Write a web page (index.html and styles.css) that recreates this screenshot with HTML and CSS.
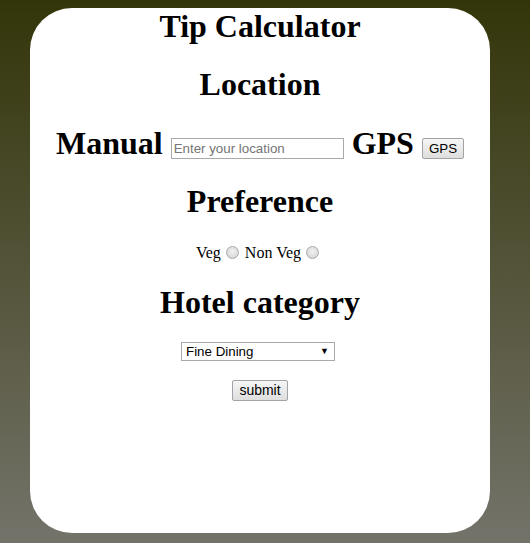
FILE: index.html
```html
<!DOCTYPE html>
<html lang="en">

<head>
    <meta charset="UTF-8">
    <meta name="viewport" content="width=device-width, initial-scale=1.0">
    <title>Tip Calculator</title>
    <link rel="stylesheet" href="styles.css">
</head>

<body>
    <div class="container">
        <h1 class="title">Tip Calculator</h1>

        <!-- Location -->
        <h1>Location</h1>
        <h1>Manual <input type="text" class="location" placeholder="Enter your location"> GPS <button type="button" class="btn">GPS</button></h1>

        <!-- Preference -->
        <h1>Preference</h1>
        <div class="pref">
            Veg <span class="radio"></span> Non Veg <span class="radio"></span>
        </div>

        <!-- Hotel category -->
        <h1>Hotel category</h1>
        <div class="row select-row">
            <span class="select-wrap">
                <select class="category">
                    <option>Fine Dining</option>
                    <option>Casual Dining</option>
                    <option>Fast Food</option>
                </select>
            </span>
        </div>
        <div class="row">
            <button type="submit" class="btn submit">submit</button>
        </div>
    </div>
</body>

</html>
```

FILE: styles.css
```css
html {
    height: 100%;
}

body {
    font-family: "Liberation Serif", "Times New Roman", serif;
    margin: 8px 40px 10px 30px;
    min-height: calc(100% - 18px);
    background: linear-gradient(to bottom, #333509 0%, #74736a 100%) fixed;
}

.container {
    height: 525px;
    background: white;
    border-radius: 42px;
    text-align: center;
    overflow: hidden;
}

h1 {
    font-size: 32px;
    margin: 0.67em 0;
}

h1.title {
    margin-top: 0;
}

.location {
    font-family: Arial, "Liberation Sans", sans-serif;
    font-size: 13.33px;
    width: 173px;
    height: 21px;
    box-sizing: border-box;
    padding: 1px 2px;
    border: 1px solid #a9a9a9;
    vertical-align: 1px;
}

.location::placeholder {
    color: #757575;
}

.btn {
    font-family: Arial, "Liberation Sans", sans-serif;
    font-size: 13.33px;
    height: 21px;
    padding: 0 6px;
    color: #000;
    background: linear-gradient(to bottom, #f6f6f6, #dedede);
    border: 1px solid #a3a3a3;
    border-radius: 2px;
    vertical-align: 1px;
}

.submit {
    height: 21px;
    padding: 0 6px;
    font-size: 14px;
}

.pref {
    font-size: 16px;
    line-height: 21px;
    padding-right: 3px;
}

.radio {
    display: inline-block;
    width: 11px;
    height: 11px;
    border: 1px solid #a8a8a8;
    border-radius: 50%;
    background: radial-gradient(circle at 50% 40%, #f2f2f2, #cfcfcf);
    vertical-align: -1px;
    margin: 0 2px 0 1px;
}

.row {
    margin-bottom: 19px;
}

.select-row {
    margin-top: -1px;
}

.select-wrap {
    position: relative;
    display: inline-block;
    margin-right: 4px;
}

.select-wrap::after {
    content: "\25BC";
    position: absolute;
    right: 6px;
    top: 4px;
    font-size: 9px;
    pointer-events: none;
}

.category {
    appearance: none;
    font-family: Arial, "Liberation Sans", sans-serif;
    font-size: 13.33px;
    width: 154px;
    height: 19px;
    padding: 0 4px;
    border: 1px solid #a9a9a9;
    border-radius: 0;
    background: white;
    color: #000;
}
```
